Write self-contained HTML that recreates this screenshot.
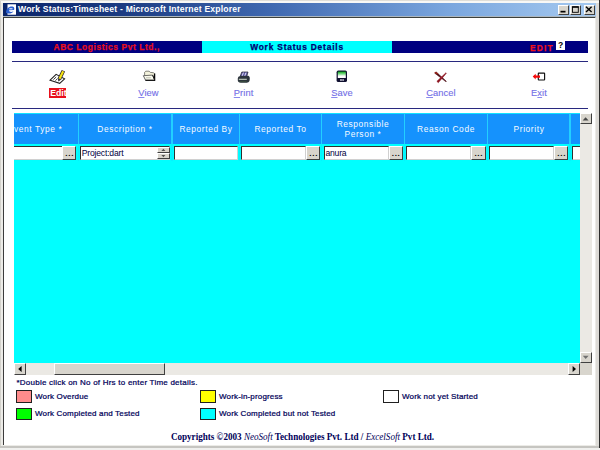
<!DOCTYPE html>
<html>
<head>
<meta charset="utf-8">
<title>Work Status:Timesheet</title>
<style>
html,body{margin:0;padding:0;}
body{width:600px;height:450px;overflow:hidden;background:#e4e2dd;position:relative;font-family:"Liberation Sans",sans-serif;}
div,span{position:absolute;box-sizing:border-box;white-space:nowrap;}
.abs{position:absolute;}
/* window frame */
#titlebar{left:3px;top:3px;width:592.5px;height:12.8px;background:linear-gradient(to right,#0a246a 0%,#1c3c82 20%,#3f68b0 45%,#7aa6de 75%,#a6caf0 100%);}
#title{left:18px;top:4.4px;height:11px;line-height:11px;color:#fff;font-weight:bold;font-size:8.6px;letter-spacing:0.2px;}
#underbar{left:3px;top:15.7px;width:592.5px;height:2px;background:#adb7bf;}
#client{left:2.8px;top:17.4px;width:592.7px;height:428px;background:#fff;border-left:1.7px solid #3c3c3c;border-top:1.6px solid #3c403c;}
.wbtn{top:5px;width:11.2px;height:9.6px;background:#d8d5cd;border:1px solid;border-color:#fff #404040 #404040 #fff;}
/* header strip */
#hdr1{left:12px;top:41px;width:190px;height:11.8px;background:#000080;}
#hdr2{left:202px;top:41px;width:190px;height:11.8px;background:#00ffff;}
#hdr3{left:392px;top:41px;width:196px;height:11.8px;background:#000080;}
.hline{left:12px;width:576px;height:1.3px;background:#28287f;}
.vb{font-weight:bold;font-size:8.4px;letter-spacing:0.6px;line-height:12px;height:12px;-webkit-text-stroke:0.25px;}
/* toolbar */
.tl{font-size:9.3px;letter-spacing:0.1px;line-height:11px;height:11px;color:#726ee6;top:87.6px;text-align:center;-webkit-text-stroke:0.12px #726ee6;}
.tl u{text-decoration:underline;text-decoration-thickness:0.8px;text-underline-offset:0.9px;text-decoration-color:#8a88ee;}
/* table */
#thead{left:14px;top:112.5px;width:566px;height:32px;background:#1592fd;border-top:1.4px solid #10e4ff;}
.sep{top:112.5px;width:1.2px;height:48.5px;background:linear-gradient(to bottom,#22d0ff 0,#22d0ff 31.5px,#08f0ff 31.5px);}
.th{color:#f6fbff;font-size:8.4px;letter-spacing:0.6px;line-height:10px;text-align:center;}
#row{left:14px;top:144.3px;width:566px;height:16.7px;background:#00ffff;}
#cyan{left:14px;top:161px;width:566px;height:202px;background:#00ffff;}
.inp{top:145.5px;height:14.5px;background:#fff;border:1px solid;border-color:#303030 #d0d0d0 #d0d0d0 #303030;border-top-width:1.5px;border-left-width:1.5px;font-size:8.6px;letter-spacing:-0.2px;line-height:13px;color:#000040;padding-left:0.8px;overflow:hidden;}
.btn{top:145.8px;width:14.2px;height:14.2px;background:#d8d5cd;border:1px solid;border-color:#fff #404040 #404040 #fff;font-size:8px;line-height:14.2px;text-align:center;font-weight:bold;color:#000;letter-spacing:0.7px;padding-left:0.7px;}
/* scrollbars */
.track{background:#ebe9e4;}
.sbtn{background:#d8d5cd;border:1px solid;border-color:#fff #404040 #404040 #fff;}
/* legend */
.lg{font-size:8px;letter-spacing:0.16px;color:#000058;line-height:10px;height:10px;-webkit-text-stroke:0.22px #000058;}
.box{width:15.5px;height:12.5px;border:1px solid #202020;}
#copy{left:0;width:605px;top:430.8px;height:13px;line-height:13px;text-align:center;font-family:"Liberation Serif",serif;font-weight:bold;font-size:9.1px;color:#000058;transform:scaleY(1.1);transform-origin:50% 75%;}
#copy i{font-weight:normal;}
</style>
</head>
<body>
<div style="left:0;top:0;width:600px;height:450px;background:#ecebe7;"></div>
<div style="left:0;top:0;width:0.8px;height:450px;background:#d4d2cc;"></div>
<div style="left:0;top:0;width:600px;height:1px;background:#e0ded8;"></div>
<div style="left:1px;top:1px;width:598px;height:2px;background:#f8f8f6;"></div>
<div style="left:595.5px;top:3px;width:3.3px;height:445px;background:#dddbd7;"></div>
<div style="left:0;top:446.3px;width:600px;height:1.8px;background:#c6c5c1;"></div>
<div style="left:0;top:448.1px;width:600px;height:2px;background:#f0f0ee;"></div>
<div style="left:598.7px;top:0;width:1.3px;height:447.5px;background:#2c2c2c;"></div>
<div id="titlebar"></div>
<div id="underbar"></div>
<div id="client"></div>
<!-- IE icon -->
<svg class="abs" style="left:5px;top:4px" width="12" height="11" viewBox="0 0 12 11">
  <rect x="2.5" y="0.3" width="8.5" height="10.4" fill="#fff"/>
  <path d="M1 8.5 C1 5 4 2.2 7.5 2.6 C9.5 3 9.6 5 9 6 L4 6.2 C4 8 6.5 8.4 8.5 7.2 C7.5 9.6 2.5 10.4 1 8.5 Z" fill="#2a5fd0"/>
  <rect x="4.3" y="4.3" width="3.2" height="1" fill="#fff"/>
</svg>
<div id="title">Work Status:Timesheet - Microsoft Internet Explorer</div>
<!-- window buttons -->
<div class="wbtn" style="left:558px"></div>
<div class="wbtn" style="left:569.8px"></div>
<div class="wbtn" style="left:583.5px"></div>
<svg class="abs" style="left:558px;top:5px" width="37" height="10" viewBox="0 0 37 10">
  <rect x="2.5" y="5.8" width="5" height="1.7" fill="#000"/>
  <rect x="14.5" y="1.9" width="5.8" height="5.4" fill="none" stroke="#000" stroke-width="0.9"/>
  <rect x="14.1" y="1.3" width="6.6" height="1.4" fill="#000"/>
  <path d="M28 1.7 L33.6 7 M33.6 1.7 L28 7" stroke="#000" stroke-width="1.35"/>
</svg>

<!-- header strip -->
<div id="hdr1"></div><div id="hdr2"></div><div id="hdr3"></div>
<div class="vb" style="left:53.5px;top:41.2px;color:#e8101c;">ABC Logistics Pvt Ltd.,</div>
<div class="vb" style="left:202px;width:190px;top:41.2px;color:#000070;text-align:center;letter-spacing:0.8px;">Work Status Details</div>
<div class="vb" style="left:530px;top:41.9px;color:#f01018;font-size:8.3px;letter-spacing:1.2px;">EDIT</div>
<div style="left:556.2px;top:41.1px;width:8.8px;height:8.5px;background:#fff;color:#000;font-weight:bold;font-size:8.6px;line-height:9px;text-align:center;">?</div>
<div class="hline" style="top:60.6px"></div>
<div class="hline" style="top:107.8px"></div>

<!-- toolbar labels -->
<div style="left:49px;top:88px;width:17px;height:9.5px;background:#e8101c;"></div>
<div class="tl" style="left:38.4px;width:40px;color:#fff;font-weight:bold;font-size:8.7px;letter-spacing:0;-webkit-text-stroke:0;">Edit</div>
<div class="tl" style="left:128.5px;width:40px;"><u>V</u>iew</div>
<div class="tl" style="left:223.6px;width:40px;"><u>P</u>rint</div>
<div class="tl" style="left:322px;width:40px;"><u>S</u>ave</div>
<div class="tl" style="left:421px;width:40px;"><u>C</u>ancel</div>
<div class="tl" style="left:519px;width:40px;">E<u>x</u>it</div>

<!-- toolbar icons -->
<!-- edit -->
<svg class="abs" style="left:49px;top:69px" width="18" height="16" viewBox="0 0 18 16">
  <path d="M1.1 11.2 L7.1 5.4 L15.6 9.8 L10.7 14.3 Z" fill="#fff" stroke="#202020" stroke-width="1.05"/>
  <path d="M4.4 10.6 L7.2 8 M6.4 11.6 L8.6 9.6" fill="none" stroke="#404040" stroke-width="1"/>
  <path d="M14.4 1.7 L10.3 10.1" stroke="#282030" stroke-width="3.7" stroke-linecap="butt"/>
  <path d="M14.2 2.2 L10.5 9.8" stroke="#f6e414" stroke-width="2.2" stroke-linecap="butt"/>
  <path d="M9 9.6 L9.4 12.4 L11.8 10.8 Z" fill="#202020"/>
</svg>
<!-- view (folder) -->
<svg class="abs" style="left:142px;top:70px" width="15" height="12" viewBox="0 0 15 12">
  <path d="M2.6 5.6 L2.6 2.3 L3.8 1.2 L7.1 1.2 L8.4 2.4 L11.4 2.7 L12.4 3.6 L12.4 9.8 L3.4 9.8 Z" fill="#f4f3dc" stroke="#5c5c54" stroke-width="0.75"/>
  <path d="M12.6 3.4 L12.6 10.3 L3.4 10.3" stroke="#060606" stroke-width="1.3" fill="none"/>
  <path d="M1.3 5.7 L10.5 5.1 L12.5 9.9 L3.5 9.9 Z" fill="#fbfbee" stroke="#484848" stroke-width="0.8"/>
  <path d="M4 7.8 L8.8 7.8" stroke="#b8b8a8" stroke-width="0.9"/>
  <path d="M10.7 5.2 L12.7 9.9" stroke="#101010" stroke-width="1"/>
</svg>
<!-- print -->
<svg class="abs" style="left:237px;top:71px" width="15" height="13" viewBox="0 0 15 13">
  <path d="M4.8 1 L11 1 L9.8 5.2 L3.2 5.2 Z" fill="#5e58a4" stroke="#20202c" stroke-width="0.7"/>
  <path d="M6.4 1.6 L5.2 4.8 M9 1.6 L7.8 4.8" stroke="#f0f0ff" stroke-width="0.9"/>
  <path d="M0.8 7.6 C0.8 5.6 2.4 4.9 3.6 4.9 L9.6 4.9 C10.4 4.4 12.8 4.6 12.8 7 L12.6 9.6 C12.2 11.4 10.8 11.7 9.8 11.7 L3.8 11.7 C1.8 11.7 0.8 10.4 0.8 9.4 Z" fill="#2c343c"/>
  <rect x="1.8" y="7.8" width="8" height="0.9" fill="#eaf4e0"/>
  <path d="M2.4 10.6 L9.6 10.6" stroke="#3c5040" stroke-width="0.9"/>
</svg>
<!-- save -->
<svg class="abs" style="left:336px;top:70.1px" width="12" height="13" viewBox="0 0 12 13">
  <defs><linearGradient id="gs" x1="0" y1="0" x2="0" y2="1"><stop offset="0" stop-color="#06a414"/><stop offset="0.4" stop-color="#8ae092"/><stop offset="0.7" stop-color="#ffffff"/></linearGradient></defs>
  <rect x="0.6" y="0.6" width="10.4" height="11.4" rx="1.6" fill="#101030"/>
  <rect x="1.8" y="1.6" width="8" height="6.4" fill="url(#gs)"/>
  <rect x="4.2" y="9.2" width="3.6" height="1.6" fill="#e8e8f0"/>
  <rect x="5.6" y="9.4" width="1" height="1.2" fill="#101030"/>
</svg>
<!-- cancel -->
<svg class="abs" style="left:434px;top:70.5px" width="14" height="13" viewBox="0 0 14 13">
  <path d="M0.75 2.2 L1.95 0.8 L12.4 10.36 L12 10.84 Z" fill="#4a0c14" stroke="#4a0c14" stroke-width="0.5" stroke-linejoin="round"/>
  <path d="M2.85 10.35 L4.3 11.7 L12.42 2.17 L11.98 1.73 Z" fill="#8c1420" stroke="#8c1420" stroke-width="0.5" stroke-linejoin="round"/>
  <path d="M1.2 1.7 L3.6 2.6" stroke="#a02418" stroke-width="1.3" stroke-linecap="round"/>
  <path d="M6.8 5.8 L8 6.8" stroke="#b01830" stroke-width="0.9" stroke-linecap="round"/>
</svg>
<!-- exit -->
<svg class="abs" style="left:532px;top:70.5px" width="14" height="11" viewBox="0 0 14 11">
  <rect x="6.3" y="2.1" width="6.3" height="6.85" rx="0.5" fill="#fff" stroke="#101010" stroke-width="1.15"/>
  <path d="M0.7 5.6 L3.7 2.8 L3.7 4.5 L8 4.5 L8 6.7 L3.7 6.7 L3.7 8.4 Z" fill="#f40808"/>
</svg>

<!-- table -->
<div id="thead"></div>
<div id="row"></div>
<div id="cyan"></div>
<div class="sep" style="left:77.6px"></div>
<div class="sep" style="left:171.4px"></div>
<div class="sep" style="left:238.8px"></div>
<div class="sep" style="left:320.9px"></div>
<div class="sep" style="left:403.8px"></div>
<div class="sep" style="left:486.7px"></div>
<div class="sep" style="left:569.4px"></div>
<div class="th" style="left:14px;width:64px;top:124px;text-align:left;">vent Type *</div>
<div class="th" style="left:79px;width:92px;top:124px;">Description *</div>
<div class="th" style="left:173px;width:66px;top:124px;">Reported By</div>
<div class="th" style="left:240px;width:81px;top:124px;">Reported To</div>
<div class="th" style="left:322px;width:82px;top:118.5px;white-space:normal;">Responsible<br>Person *</div>
<div class="th" style="left:405px;width:82px;top:124px;">Reason Code</div>
<div class="th" style="left:488px;width:82px;top:124px;">Priority</div>

<!-- inputs -->
<div class="inp" style="left:14px;width:48.5px;border-left:none;"></div>
<div class="btn" style="left:62.3px;">...</div>
<div class="inp" style="left:80px;width:89.8px;">Project:dart</div>
<div class="inp" style="left:173.9px;width:64px;"></div>
<div class="inp" style="left:241.2px;width:65px;"></div>
<div class="btn" style="left:306.3px;">...</div>
<div class="inp" style="left:323.6px;width:65px;">anura</div>
<div class="btn" style="left:388.7px;">...</div>
<div class="inp" style="left:406.3px;width:65px;"></div>
<div class="btn" style="left:471.4px;">...</div>
<div class="inp" style="left:489.2px;width:65px;"></div>
<div class="btn" style="left:554.3px;">...</div>
<div class="inp" style="left:571.5px;width:8.5px;border-right:none;"></div>
<!-- textarea spinner -->
<div class="track" style="left:157px;top:147px;width:12.5px;height:12px;"></div>
<div class="sbtn" style="left:157px;top:147px;width:12.5px;height:6px;"></div>
<div class="sbtn" style="left:157px;top:153px;width:12.5px;height:6px;"></div>
<svg class="abs" style="left:157px;top:147px" width="13" height="12" viewBox="0 0 13 12">
  <path d="M4.4 4 L6.4 1.8 L8.4 4 Z" fill="#505050"/>
  <path d="M4.4 8 L6.4 10.2 L8.4 8 Z" fill="#505050"/>
</svg>

<!-- vertical scrollbar -->
<div class="track" style="left:580px;top:112.5px;width:12px;height:250.5px;"></div>
<div class="sbtn" style="left:580px;top:112.5px;width:12px;height:11.5px;"></div>
<div class="sbtn" style="left:580px;top:351.5px;width:12px;height:11.5px;"></div>
<svg class="abs" style="left:580px;top:112.5px" width="12" height="251" viewBox="0 0 12 251">
  <path d="M2.6 7.6 L5.6 4.2 L8.6 7.6 Z" fill="#484848"/>
  <path d="M2.8 242.8 L5.7 246 L8.6 242.8 Z" fill="#707070"/>
</svg>
<!-- horizontal scrollbar -->
<div class="track" style="left:14px;top:363px;width:566px;height:12px;"></div>
<div class="sbtn" style="left:14px;top:363px;width:12px;height:12px;"></div>
<div class="sbtn" style="left:568px;top:363px;width:12px;height:12px;"></div>
<div class="sbtn" style="left:53.5px;top:363px;width:111.5px;height:12px;"></div>
<div style="left:580px;top:363px;width:12px;height:12px;background:#d8d5cd;"></div>
<svg class="abs" style="left:14px;top:363px" width="566" height="12" viewBox="0 0 566 12">
  <path d="M7.6 3 L4.2 6 L7.6 9 Z" fill="#000"/>
  <path d="M558.6 3 L562 6 L558.6 9 Z" fill="#000"/>
</svg>

<!-- legend -->
<div class="lg" style="left:16.5px;top:377.5px;letter-spacing:0.23px;">*Double click on No of Hrs to enter Time details.</div>
<div class="box" style="left:16px;top:390.3px;background:#ff8c8c;"></div>
<div class="lg" style="left:35px;top:391.5px;">Work Overdue</div>
<div class="box" style="left:16px;top:407.5px;background:#00ff00;"></div>
<div class="lg" style="left:35px;top:408.5px;">Work Completed and Tested</div>
<div class="box" style="left:200px;top:390.3px;background:#ffff00;"></div>
<div class="lg" style="left:219px;top:391.5px;">Work-in-progress</div>
<div class="box" style="left:200px;top:407.5px;background:#00ffff;"></div>
<div class="lg" style="left:219px;top:408.5px;">Work Completed but not Tested</div>
<div class="box" style="left:383px;top:390.3px;background:#ffffff;"></div>
<div class="lg" style="left:402px;top:391.5px;">Work not yet Started</div>

<div id="copy">Copyrights ©2003 <i>NeoSoft</i> Technologies Pvt. Ltd / <i>ExcelSoft</i> Pvt Ltd.</div>
</body>
</html>
